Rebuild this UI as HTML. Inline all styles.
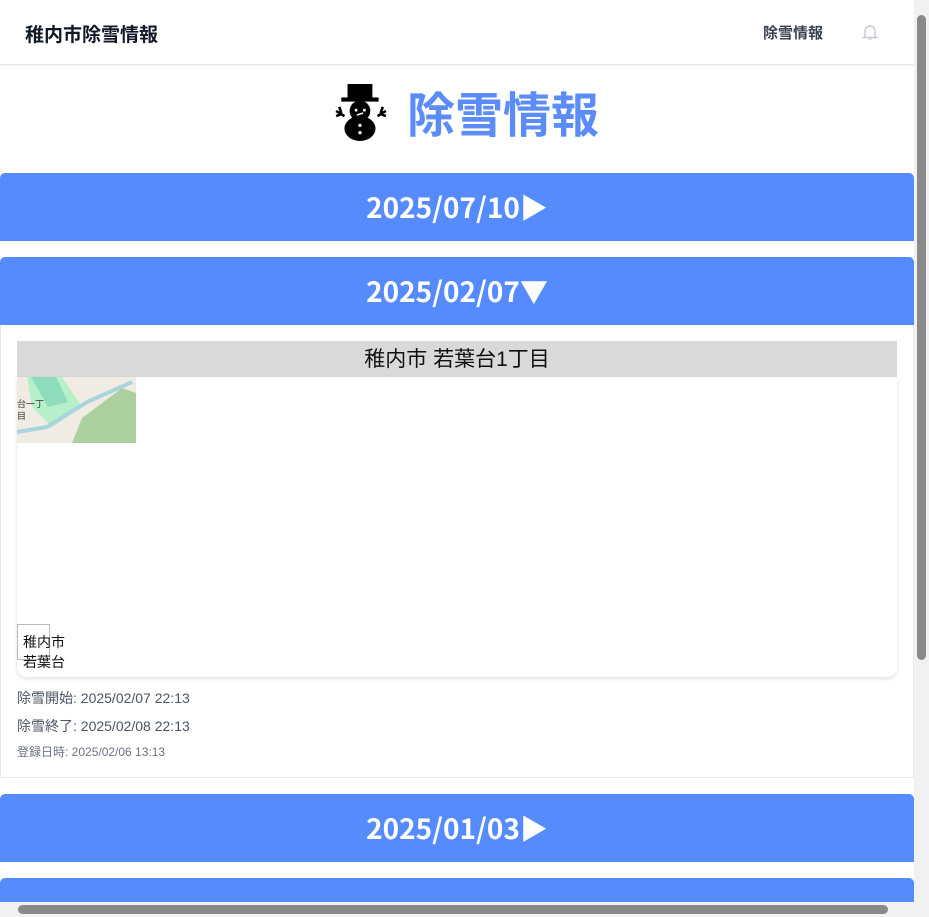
<!DOCTYPE html>
<html><head><meta charset="utf-8"><style>
*{box-sizing:border-box;margin:0;padding:0}
html,body{width:929px;height:917px;overflow:hidden}
body{background:#fff;font-family:"Liberation Sans","Noto Sans CJK JP",sans-serif;position:relative}
.hdr{position:absolute;left:0;top:0;width:914px;height:65px;border-bottom:1px solid #e5e7eb;box-shadow:0 1px 2px rgba(0,0,0,.04)}
.hdr .t{position:absolute;left:25px;top:20px;font-size:19px;font-weight:bold;color:#111827}
.hdr .n{position:absolute;left:763px;top:22px;font-size:15px;font-weight:bold;color:#374151}
.title{position:absolute;left:9px;width:914px;top:84px;text-align:center;font-size:48px;font-weight:bold;color:#5b8cf8;line-height:66px}
.bar{position:absolute;left:0;width:914px;height:68px;background:#558bfd;border-radius:5px 5px 0 0;color:#fff;font-size:28px;font-weight:bold;text-align:center;line-height:68px;font-family:"Noto Sans CJK JP","Liberation Sans",sans-serif}
.box{position:absolute;left:0;top:325px;width:914px;height:453px;border:1px solid #e5e7eb;border-top:none}
.gh{position:absolute;left:16px;top:16px;width:880px;height:36px;background:#d9d9d9;text-align:center;font-size:21px;line-height:38px;color:#111}
.card{position:absolute;left:16px;top:52px;width:880px;height:300px;background:#fff;border-radius:0 0 10px 10px;box-shadow:0 2px 5px rgba(0,0,0,.12);overflow:hidden}
.info{position:absolute;left:16px;font-size:14px;color:#4b5563}
.sb{position:absolute;background:#8a8a8a;border-radius:5px}
</style></head><body>
<div class="hdr"><div class="t">稚内市除雪情報</div><div class="n">除雪情報</div>
<svg style="position:absolute;left:861px;top:23px" width="18" height="18" viewBox="0 0 18 18" fill="none" stroke="#c4c8d0" stroke-width="1.4"><path d="M4 13V8a5 5 0 0 1 10 0v5l1.5 1.5h-13z"/><path d="M7.5 16h3"/></svg></div>
<div class="title"><svg style="vertical-align:-10px;margin-right:18px" width="56" height="58" viewBox="0 0 54 56"><rect x="14" y="0" width="24" height="16" fill="#000"/><rect x="8" y="13" width="36" height="4" fill="#000"/><circle cx="26" cy="26" r="10" fill="#000"/><ellipse cx="26" cy="43" rx="15" ry="12" fill="#000"/><path d="M3 26l8 5M3 31l5-2M51 26l-8 5M51 31l-5-2M6 22l2 6M48 22l-2 6" stroke="#000" stroke-width="2.5"/><rect x="21" y="24" width="2.5" height="2.5" fill="#fff"/><rect x="29" y="24" width="2.5" height="2.5" fill="#fff"/><path d="M23 30l6-2" stroke="#fff" stroke-width="1.5"/><circle cx="26" cy="40" r="1.6" fill="#fff"/><circle cx="26" cy="47" r="1.6" fill="#fff"/></svg>除雪情報</div>
<div class="bar" style="top:173px">2025/07/10▶</div>
<div class="bar" style="top:257px">2025/02/07▼</div>
<div class="box">
<div class="gh">稚内市 若葉台1丁目</div>
<div class="card">
<svg width="119" height="66" style="position:absolute;left:0;top:0"><rect width="119" height="66" fill="#f0ece4"/><path d="M10 0h35l20 30-30 20-20-20z" fill="#b6f0c8"/><path d="M14 0h25l12 25-20 5z" fill="#8ddcbc"/><path d="M0 55l30-5 40-25 45-20" stroke="#a9d3df" stroke-width="4" fill="none"/><path d="M55 66l10-25 40-30 14 5v50z" fill="#add19e"/><text x="0" y="30" font-size="9" fill="#333">台一丁</text><text x="0" y="42" font-size="9" fill="#333">目</text></svg>
<div style="position:absolute;left:0;top:247px;width:33px;height:36px;border:1px solid #bbb"></div>
<div style="position:absolute;left:6px;top:255px;font-size:14px;line-height:20px;color:#111">稚内市<br>若葉台</div>
</div>
<div class="info" style="top:363px">除雪開始: 2025/02/07 22:13</div>
<div class="info" style="top:391px">除雪終了: 2025/02/08 22:13</div>
<div class="info" style="top:418px;font-size:12px;color:#6b7280">登録日時: 2025/02/06 13:13</div>
</div>
<div class="bar" style="top:794px">2025/01/03▶</div>
<div class="bar" style="top:878px;height:24px;overflow:hidden"></div>
<div style="position:absolute;left:914px;top:0;width:15px;height:917px;background:#f1f1f1"></div>
<div class="sb" style="left:917px;top:15px;width:9px;height:645px"></div>
<div style="position:absolute;left:0;top:902px;width:914px;height:15px;background:#f1f1f1"></div>
<div class="sb" style="left:18px;top:905px;width:870px;height:9px"></div>
</body></html>
